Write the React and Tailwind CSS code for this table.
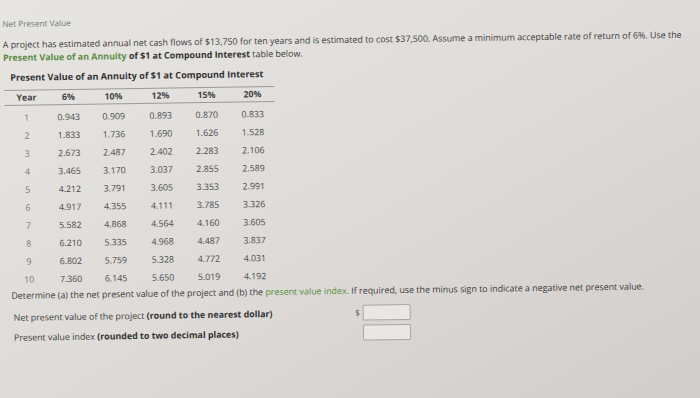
import React from "react";

const rates = ["6%", "10%", "12%", "15%", "20%"];

const rows = [
  ["1", "0.943", "0.909", "0.893", "0.870", "0.833"],
  ["2", "1.833", "1.736", "1.690", "1.626", "1.528"],
  ["3", "2.673", "2.487", "2.402", "2.283", "2.106"],
  ["4", "3.465", "3.170", "3.037", "2.855", "2.589"],
  ["5", "4.212", "3.791", "3.605", "3.353", "2.991"],
  ["6", "4.917", "4.355", "4.111", "3.785", "3.326"],
  ["7", "5.582", "4.868", "4.564", "4.160", "3.605"],
  ["8", "6.210", "5.335", "4.968", "4.487", "3.837"],
  ["9", "6.802", "5.759", "5.328", "4.772", "4.031"],
  ["10", "7.360", "6.145", "5.650", "5.019", "4.192"],
];

// one answer line: label on the left, input box on the right
const AnswerRow = ({ label, hint, prefix }) => (
  <div className="flex items-center h-[20px]">
    <div className="w-[344px] pl-[9px] whitespace-nowrap">
      {label} <span className="font-bold text-[#333]">{hint}</span>
    </div>
    <span className="w-[14px] mb-[3px] text-[8px] text-[#555] text-right pr-[3px]">{prefix}</span>
    <input
      type="text"
      className="w-[48px] h-[16px] mb-[3px] border border-[#a9a6a3] rounded-[2px] bg-[#e9e7e4] outline-none"
    />
  </div>
);

export default function App() {
  return (
    <div className="w-[700px] h-[398px] overflow-hidden bg-linear-to-br from-[#e7e5e2] via-[#dedbd8] to-[#d1cdca] font-['Open_Sans','DejaVu_Sans',sans-serif] text-[#3d3d3d]">
      <div className="origin-top-left rotate-[-0.85deg]">
        <p className="pt-[18px] pl-[2px] text-[8.2px] leading-[12px] text-[#737a70]">
          Net Present Value
        </p>

        <p className="mt-[8px] pl-[2px] text-[8.9px] leading-[13px] whitespace-nowrap">
          A project has estimated annual net cash flows of $13,750 for ten years and is estimated
          to cost $37,500. Assume a minimum acceptable rate of return of 6%. Use the
          <br />
          <span className="font-bold text-[#5b8c43]">Present Value of an Annuity</span>{" "}
          <span className="font-bold text-[#333]">of $1 at Compound Interest</span> table below.
        </p>

        {/* annuity table */}
        <div className="mt-[8px] ml-[3px] w-[270px]">
          <div className="pl-[6px] h-[12px] leading-[12px] text-[9.1px] font-bold text-[#333] whitespace-nowrap">
            Present Value of an Annuity of $1 at Compound Interest
          </div>
          <div className="mt-[6px] border-t border-[#9c9996]" />
          <div className="grid grid-cols-[44px_40px_50px_44px_48px_44px] h-[15px] items-center text-center text-[8.8px] leading-[10px] font-bold text-[#444] border-b border-[#9c9996]">
            <span>Year</span>
            {rates.map((r) => (
              <span key={r}>{r}</span>
            ))}
          </div>
          <div className="pt-[3px]">
            {rows.map((row) => (
              <div
                key={row[0]}
                className="grid grid-cols-[44px_40px_50px_44px_48px_44px] h-[18px] items-center text-center text-[8.8px] leading-[10px]"
              >
                {row.map((cell, i) => (
                  <span key={i} className={i === 0 ? "text-[#777]" : "text-[#4a4a4a]"}>
                    {cell}
                  </span>
                ))}
              </div>
            ))}
          </div>
        </div>

        <p className="mt-[2px] pl-[7px] text-[8.9px] leading-[10px] whitespace-nowrap">
          Determine (a) the net present value of the project and (b) the{" "}
          <span className="text-[#5b8c43]">present value index.</span> If required, use the minus
          sign to indicate a negative net present value.
        </p>

        <div className="mt-[8px] text-[8.85px]">
          <AnswerRow
            label="Net present value of the project"
            hint="(round to the nearest dollar)"
            prefix="$"
          />
          <AnswerRow
            label="Present value index"
            hint="(rounded to two decimal places)"
            prefix=""
          />
        </div>
      </div>
    </div>
  );
}
